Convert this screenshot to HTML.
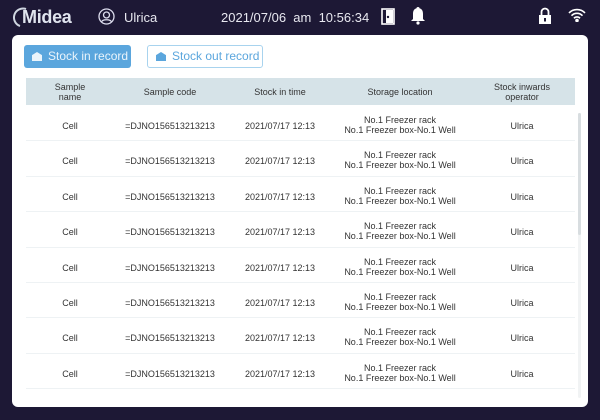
<!DOCTYPE html>
<html><head><meta charset="utf-8"><style>
*{margin:0;padding:0;box-sizing:border-box}
body{width:600px;height:420px;background:#1d1835;font-family:"Liberation Sans",sans-serif;position:relative;overflow:hidden}
.top{position:absolute;left:0;top:0;width:600px;height:34px;color:#e8e8f0;font-size:13px}
.t{position:absolute;top:10px}
.card{position:absolute;left:12px;top:35px;width:576px;height:372px;background:#fff;border-radius:6px;overflow:hidden}
.btn{position:absolute;top:10px;height:23px;border-radius:3px;font-size:12px;line-height:23px;padding-left:24px}
.b1{left:12px;width:107px;background:#5ba6dd;color:#eaf4fb}
.b2{left:135px;width:116px;background:#fff;border:1px solid #a8d3ee;color:#5ba6dd;line-height:21px}
.ico{position:absolute;left:8px;top:7px;width:10px;height:9px;background:currentColor;clip-path:polygon(0 35%,50% 0,100% 35%,100% 100%,0 100%)}
.hdr{position:absolute;left:14px;top:43px;width:549px;height:27px;background:#d6e3e8}
.c{position:absolute;text-align:center;font-size:9px;color:#333;transform:translateX(-50%);white-space:nowrap;line-height:10px}
.row{position:absolute;left:14px;width:549px;height:35.4px;border-bottom:1px solid #eef2f4}
.sb{position:absolute;left:566px;top:78px;width:3px;height:122px;background:#d8dde0;border-radius:2px}
.sbt{position:absolute;left:566px;top:78px;width:3px;height:285px;background:#f1f3f4;border-radius:2px}
</style></head><body>
<div class="top">
<svg style="position:absolute;left:12px;top:6px" width="20" height="22" viewBox="0 0 20 22" fill="none" stroke="#cfd6e0" stroke-width="2"><path d="M14 3A9 9 0 1 0 8 20"/></svg>
<div class="t" style="left:22px;top:7px;font-size:18px;font-weight:bold;color:#e0e4ee;letter-spacing:-0.3px">Midea</div>
<svg style="position:absolute;left:98px;top:8px" width="17" height="17" viewBox="0 0 17 17" fill="none" stroke="#dde" stroke-width="1.3"><circle cx="8.5" cy="8.5" r="7.5"/><circle cx="8.5" cy="7" r="3"/><path d="M3.5 14c1-3 9-3 10 0"/></svg>
<div class="t" style="left:124px">Ulrica</div>
<div class="t" style="left:221px">2021/07/06&nbsp; am&nbsp; 10:56:34</div>
<svg style="position:absolute;left:381px;top:8px" width="14" height="17" viewBox="0 0 14 17"><rect x="1" y="1" width="12" height="15" fill="none" stroke="#fff" stroke-width="1.6"/><rect x="5" y="2" width="7" height="13" fill="#fff"/><circle cx="7" cy="9" r="1.2" fill="#1d1835"/></svg>
<svg style="position:absolute;left:410px;top:6px" width="16" height="19" viewBox="0 0 16 19"><path d="M8 1c-1 0-1.5.6-1.5 1.3C4 3 3 5 3 8v5l-2 2h14l-2-2V8c0-3-1-5-3.5-5.7C9.5 1.6 9 1 8 1z" fill="#fff"/><circle cx="8" cy="17" r="1.6" fill="#fff"/></svg>
<svg style="position:absolute;left:538px;top:7px" width="14" height="18" viewBox="0 0 14 18"><path d="M3.5 8V5a3.5 3.5 0 017 0v3" fill="none" stroke="#fff" stroke-width="1.8"/><rect x="1" y="8" width="12" height="9" fill="#fff"/><rect x="6" y="11" width="2" height="3.5" fill="#1d1835"/></svg>
<svg style="position:absolute;left:568px;top:8px" width="18" height="14" viewBox="0 0 18 14" fill="none" stroke="#fff" stroke-width="1.6"><path d="M1 5a11 11 0 0116 0"/><path d="M3.5 7.7a7.5 7.5 0 0111 0"/><path d="M6 10.3a4 4 0 016 0"/><circle cx="9" cy="12.5" r="1" fill="#fff"/></svg>
</div>
<div class="card">
<div class="btn b1"><span class="ico"></span>Stock in record</div>
<div class="btn b2"><span class="ico" style="top:6px"></span>Stock out record</div>
<div class="hdr">
<div class="c" style="left:44px;top:4px">Sample<br>name</div>
<div class="c" style="left:144px;top:9px">Sample code</div>
<div class="c" style="left:254px;top:9px">Stock in time</div>
<div class="c" style="left:374px;top:9px">Storage location</div>
<div class="c" style="left:496px;top:4px">Stock inwards<br>operator</div>
</div>
<div id="rows"></div>
<div class="sbt"></div><div class="sb"></div>
</div>
<script>
var h='';for(var i=0;i<8;i++){var t=71+i*35.4;h+='<div class="row" style="top:'+t+'px"><div class="c" style="left:44px;top:15px">Cell</div><div class="c" style="left:144px;top:15px">=DJNO156513213213</div><div class="c" style="left:254px;top:15px">2021/07/17 12:13</div><div class="c" style="left:374px;top:9px">No.1 Freezer rack<br>No.1 Freezer box-No.1 Well</div><div class="c" style="left:496px;top:15px">Ulrica</div></div>';}
document.getElementById('rows').innerHTML=h;
</script>
</body></html>
